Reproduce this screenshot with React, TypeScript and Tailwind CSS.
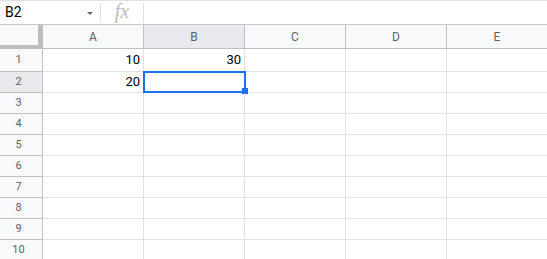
import React from "react";

const cols = ["A", "B", "C", "D", "E"];
const rows = [1, 2, 3, 4, 5, 6, 7, 8, 9, 10];

const data: Record<string, string> = {
  A1: "10",
  B1: "30",
  A2: "20",
};

export default function App() {
  return (
    <div className="w-[547px] h-[259px] overflow-hidden bg-white font-['Roboto','Liberation_Sans',sans-serif] border-t border-[#e0e0e0]">
      {/* Formula bar */}
      <div className="flex items-center h-[24px] border-b border-[#c7c7c7]">
        <div className="relative w-[100px] h-full flex items-center pl-[5px] text-[14px] text-[#000]">
          B2
          <span className="absolute left-[87px] top-[11px] w-0 h-0 border-l-[3.5px] border-r-[3.5px] border-t-[3.5px] border-l-transparent border-r-transparent border-t-[#666]" />
        </div>
        <div className="w-px h-[20px] bg-[#e0e0e0]" />
        <div className="w-[42px] flex items-center justify-center font-['Liberation_Serif',serif] italic text-[20px] text-[#bdbdbd] leading-none pb-[3px]">
          fx
        </div>
        <div className="w-px h-[20px] bg-[#e0e0e0]" />
        <div className="flex-1" />
      </div>

      {/* Grid */}
      <div className="relative">
        <div className="flex h-[24px]">
          <div className="w-[43px] shrink-0 bg-[#f8f9fa] border-r-[5px] border-b-[4px] border-[#bdbdbd]" />
          {cols.map((c) => (
            <div
              key={c}
              className={`w-[101px] shrink-0 flex items-center justify-center text-[12px] text-[#5f6368] border-r border-b border-[#c0c0c0] ${
                c === "B" ? "bg-[#e8eaed]" : "bg-[#f8f9fa]"
              }`}
            >
              {c}
            </div>
          ))}
        </div>
        {rows.map((r) => (
          <div key={r} className={`flex ${r === 1 ? "h-[23px]" : "h-[21px]"}`}>
            <div
              className={`w-[43px] shrink-0 flex items-center justify-center pr-[5px] text-[11px] text-[#5f6368] border-r border-b border-[#c0c0c0] ${
                r === 2 ? "bg-[#e8eaed]" : "bg-[#f8f9fa]"
              }`}
            >
              {r}
            </div>
            {cols.map((c) => (
              <div
                key={c}
                className="w-[101px] shrink-0 flex items-center justify-end pr-[3px] text-[13px] text-black border-r border-b border-[#e2e2e2]"
              >
                {data[c + r] ?? ""}
              </div>
            ))}
          </div>
        ))}

        {/* Selection */}
        <div className="absolute left-[143px] top-[46px] w-[103px] h-[22px] border-2 border-[#1a73e8]" />
        <div className="absolute left-[242px] top-[63px] w-[6px] h-[6px] bg-[#1a73e8]" />
      </div>
    </div>
  );
}
